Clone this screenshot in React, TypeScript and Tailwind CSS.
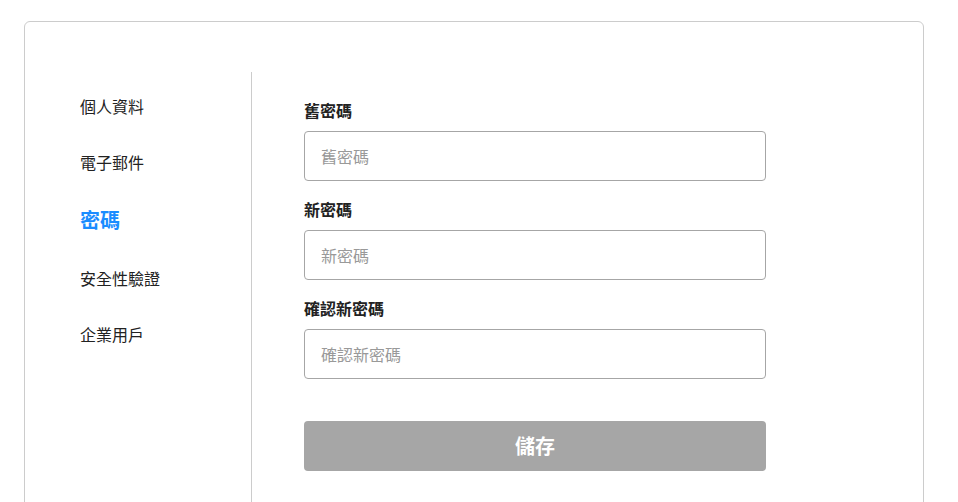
import React, { useState } from 'react';

const font = "font-['Noto_Sans_CJK_TC','Noto_Sans',sans-serif]";

const menuItems = ['個人資料', '電子郵件', '密碼', '安全性驗證', '企業用戶'];

const fields = [
  { label: '舊密碼', placeholder: '舊密碼' },
  { label: '新密碼', placeholder: '新密碼' },
  { label: '確認新密碼', placeholder: '確認新密碼' },
];

const App: React.FC = () => {
  const [active, setActive] = useState('密碼');

  return (
    <div className={`min-h-screen bg-white pt-[21px] pl-[24px] ${font}`}>
      <div className="w-[900px] h-[600px] rounded-md border border-[#cccccc] bg-white pt-[50px]">
        <div className="flex h-full">
          <div className="w-[227px] shrink-0 border-r border-[#cccccc] pl-[55px] pt-[22px]">
            <ul className="flex flex-col gap-8">
              {menuItems.map((item) => (
                <li key={item}>
                  <button
                    onClick={() => setActive(item)}
                    className={
                      item === active
                        ? 'text-[20px] leading-[28px] font-bold text-[#1a8cff]'
                        : 'text-[16px] leading-[24px] text-[#222222]'
                    }
                  >
                    {item}
                  </button>
                </li>
              ))}
            </ul>
          </div>
          <div className="pl-[52px] pt-[26px]">
            <form className="w-[462px] flex flex-col" onSubmit={(e) => e.preventDefault()}>
              {fields.map((f, i) => (
                <div key={f.label} className={i > 0 ? 'mt-[16px]' : ''}>
                  <label className="block text-[16px] leading-[24px] font-bold text-[#222222]">{f.label}</label>
                  <input
                    type="password"
                    placeholder={f.placeholder}
                    className="mt-[9px] block w-full h-[50px] rounded-[4px] border border-[#a6a6a6] px-4 text-[16px] text-[#222222] placeholder:text-[#999999] outline-none"
                  />
                </div>
              ))}
              <button
                type="submit"
                className="mt-[42px] h-[50px] w-full rounded-[4px] bg-[#a6a6a6] text-[20px] font-bold text-white"
              >
                儲存
              </button>
            </form>
          </div>
        </div>
      </div>
    </div>
  );
};

export default App;
